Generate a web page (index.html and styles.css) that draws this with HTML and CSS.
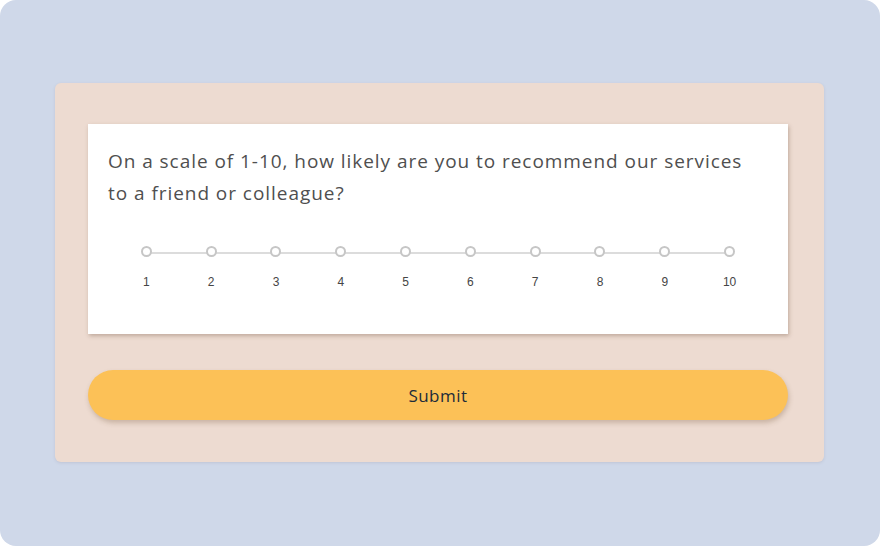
FILE: index.html
```html
<!DOCTYPE html>
<html>
<head>
<meta charset="utf-8">
<link rel="stylesheet" href="styles.css">
</head>
<body>
<div class="frame">
  <div class="panel">
    <div class="card">
      <p class="question">On a scale of 1-10, how likely are you to recommend our services to a friend or colleague?</p>
      <div class="scale">
        <div class="opt"><span class="dot"></span><span class="num">1</span></div>
        <div class="opt"><span class="dot"></span><span class="num">2</span></div>
        <div class="opt"><span class="dot"></span><span class="num">3</span></div>
        <div class="opt"><span class="dot"></span><span class="num">4</span></div>
        <div class="opt"><span class="dot"></span><span class="num">5</span></div>
        <div class="opt"><span class="dot"></span><span class="num">6</span></div>
        <div class="opt"><span class="dot"></span><span class="num">7</span></div>
        <div class="opt"><span class="dot"></span><span class="num">8</span></div>
        <div class="opt"><span class="dot"></span><span class="num">9</span></div>
        <div class="opt"><span class="dot"></span><span class="num">10</span></div>
      </div>
    </div>
    <button class="submit">Submit</button>
  </div>
</div>
</body>
</html>
```
FILE: styles.css
```css
html, body {
  margin: 0;
  padding: 0;
  background: #ffffff;
}
.frame {
  width: 880px;
  height: 546px;
  background: #cfd8e9;
  border-radius: 16px;
  box-sizing: border-box;
  padding: 83px 56px 0 55px;
}
.panel {
  width: 769px;
  height: 379px;
  box-sizing: border-box;
  background: #eddbd1;
  border-radius: 6px;
  box-shadow: 0 1px 3px rgba(120, 110, 130, 0.18);
  padding: 41px 36px 0 33px;
  display: flex;
  flex-direction: column;
  gap: 36px;
}
.card {
  height: 210px;
  box-sizing: border-box;
  background: #ffffff;
  box-shadow: 1px 2px 4px rgba(110, 80, 60, 0.35);
  padding: 21px 20px 0 20px;
}
.question {
  margin: 0;
  font-family: "Open Sans", "DejaVu Sans", sans-serif;
  font-size: 19px;
  line-height: 32px;
  color: #4f4f4f;
  letter-spacing: 0.95px;
}
.scale {
  position: relative;
  margin-top: 37px;
  padding: 0 6px;
  display: grid;
  grid-template-columns: repeat(10, 1fr);
}
.scale::before {
  content: "";
  position: absolute;
  left: 38.4px;
  right: 38.4px;
  top: 6px;
  height: 2px;
  background: #dcdcdc;
}
.opt {
  display: flex;
  flex-direction: column;
  align-items: center;
  gap: 18px;
  position: relative;
}
.dot {
  width: 7px;
  height: 7px;
  border: 2px solid #c6c6c6;
  border-radius: 50%;
  background: #ffffff;
}
.num {
  font-family: "Liberation Sans", Arial, sans-serif;
  font-size: 12px;
  line-height: 14px;
  color: #454545;
}
.submit {
  height: 50px;
  border: none;
  border-radius: 25px;
  background: #fcc157;
  box-shadow: 1px 3px 5px rgba(120, 90, 60, 0.3);
  font-family: "Open Sans", "DejaVu Sans", sans-serif;
  font-size: 17px;
  color: #1c2b3a;
  letter-spacing: 0.5px;
  padding: 0;
}
```
